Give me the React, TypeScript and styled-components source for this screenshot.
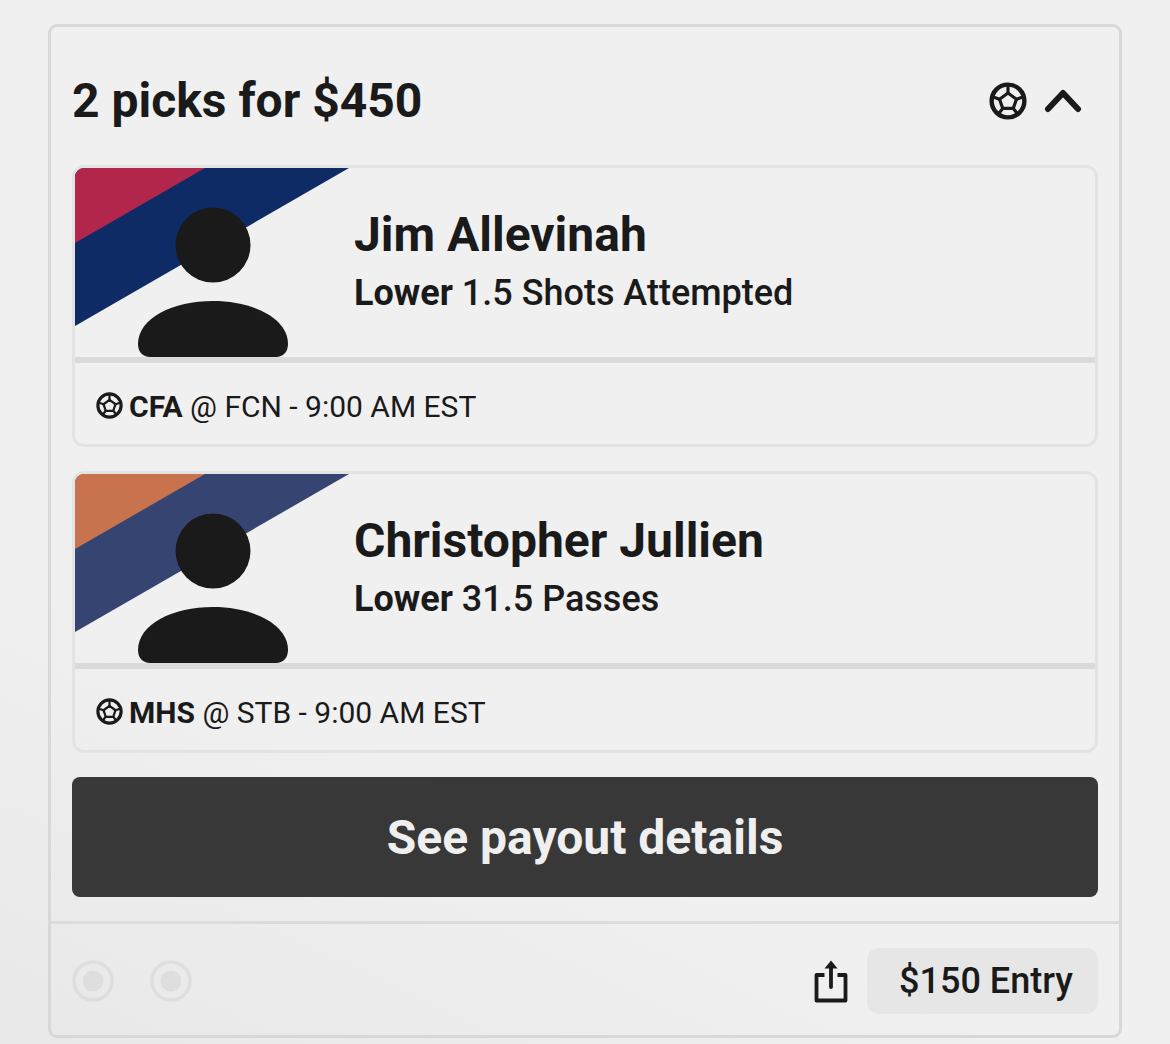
import React from 'react'
import styled, { createGlobalStyle } from 'styled-components'

const picks = [
  {
    name: 'Jim Allevinah',
    bet: 'Lower',
    line: '1.5 Shots Attempted',
    team: 'CFA',
    game: '@ FCN - 9:00 AM EST',
    primary: '#0f2b66',
    secondary: '#b1264a',
  },
  {
    name: 'Christopher Jullien',
    bet: 'Lower',
    line: '31.5 Passes',
    team: 'MHS',
    game: '@ STB - 9:00 AM EST',
    primary: '#364471',
    secondary: '#c9734e',
  },
]

const BallIcon = ({ size }: { size: number }) => (
  <svg width={size} height={size} viewBox="0 0 36 36" fill="none" stroke="#1a1a1a" strokeLinejoin="round">
    <circle cx="18" cy="18" r="15.500" strokeWidth="4.200" />
    <polygon points="18,10.500 26,16.300 23,25 13,25 10,16.300" strokeWidth="3" />
    <path d="M18 10.500V4M26 16.300l6-2M23 25l4 5M13 25l-4 5M10 16.300l-6-2" strokeWidth="3" />
  </svg>
)

const ShareIcon = () => (
  <svg width="34" height="44" viewBox="0 0 34 44" fill="none" stroke="#1a1a1a" strokeWidth="3.800" strokeLinejoin="round">
    <path d="M10.500 16H2.500V41.500H31.500V16H23.500" />
    <path d="M17 6V28" strokeLinecap="round" />
    <path d="M10.500 9.500L17 1.500L23.500 9.500Z" fill="#1a1a1a" stroke="none" />
  </svg>
)

const Radio = () => (
  <svg width="42" height="42" viewBox="0 0 42 42" fill="none">
    <circle cx="21" cy="21" r="19" stroke="#dedede" strokeWidth="3.500" />
    <circle cx="21" cy="21" r="10.500" fill="#dedede" />
  </svg>
)

const App = () => {
  return (
    <Page>
      <GlobalStyle />
      <Card>
        <Body>
          <Header>
            <Title>2 picks for $450</Title>
            <HeaderIcons>
              <BallIcon size={38} />
              <svg width="38" height="26" viewBox="0 0 38 26" fill="none" stroke="#1a1a1a" strokeWidth="6" strokeLinecap="round" strokeLinejoin="round">
                <path d="M4 21L19 5L34 21" />
              </svg>
            </HeaderIcons>
          </Header>
          <PickList>
            {picks.map((pick) => (
              <Pick key={pick.name}>
                <PickTop>
                  <Portrait viewBox="0 0 279 189" width="279" height="189">
                    <polygon points="0,0 274,0 0,158" fill={pick.primary} />
                    <polygon points="0,0 130,0 0,75" fill={pick.secondary} />
                    <circle cx="138" cy="77" r="37.500" fill="#1a1a1a" />
                    <path d="M63 176C63 150 98 133 138 133C178 133 213 150 213 176C213 184 208 189 201 189H75C68 189 63 184 63 176Z" fill="#1a1a1a" />
                  </Portrait>
                  <PickInfo>
                    <PlayerName>{pick.name}</PlayerName>
                    <Line>
                      <strong>{pick.bet}</strong> {pick.line}
                    </Line>
                  </PickInfo>
                </PickTop>
                <PickFooter>
                  <BallIcon size={27} />
                  <Game>
                    <strong>{pick.team}</strong> {pick.game}
                  </Game>
                </PickFooter>
              </Pick>
            ))}
          </PickList>
          <PayoutButton>See payout details</PayoutButton>
        </Body>
        <Footer>
          <Radios>
            <Radio />
            <Radio />
          </Radios>
          <FooterActions>
            <ShareIcon />
            <EntryPill>$150 Entry</EntryPill>
          </FooterActions>
        </Footer>
      </Card>
    </Page>
  )
}

const GlobalStyle = createGlobalStyle`
  html, body {
    margin: 0;
    padding: 0;
    background: #f0f0f0;
  }
  * {
    box-sizing: border-box;
  }
`

const Page = styled.div`
  width: 1170px;
  height: 1044px;
  padding: 24px 48px 0;
  overflow: hidden;
  font-family: Roboto, "Liberation Sans", sans-serif;
  color: #1a1a1a;
  background: linear-gradient(25deg, #e8e8e8 0%, #f0f0f0 30%);
`

const Card = styled.div`
  width: 1074px;
  height: 1014px;
  border: 3px solid #d8d8d8;
  border-radius: 9px;
`

const Body = styled.div`
  padding: 0 21px 0 21px;
`

const Header = styled.div`
  height: 138px;
  padding-top: 9px;
  display: flex;
  align-items: center;
  justify-content: space-between;
`

const Title = styled.div`
  font-size: 48px;
  font-weight: 700;
  line-height: 54px;
`

const HeaderIcons = styled.div`
  display: flex;
  align-items: center;
  gap: 17px;
  padding-right: 16px;
`

const PickList = styled.div`
  display: flex;
  flex-direction: column;
  gap: 24px;
`

const Pick = styled.div`
  height: 282px;
  border: 3px solid #e3e3e3;
  border-radius: 12px;
  overflow: hidden;
`

const PickTop = styled.div`
  height: 195px;
  display: flex;
  border-bottom: 6px solid #dadada;
`

const Portrait = styled.svg`
  display: block;
  flex: none;
`

const PickInfo = styled.div`
  display: flex;
  flex-direction: column;
  padding-top: 39px;
`

const PlayerName = styled.div`
  font-size: 48px;
  font-weight: 700;
  line-height: 56px;
`

const Line = styled.div`
  margin-top: 10px;
  font-size: 36px;
  font-weight: 500;
  line-height: 40px;

  strong {
    font-weight: 700;
  }
`

const PickFooter = styled.div`
  height: 81px;
  display: flex;
  align-items: center;
  gap: 6px;
  padding: 4px 0 0 21px;
`

const Game = styled.div`
  margin-top: 2px;
  font-size: 30px;
  line-height: 36px;

  strong {
    font-weight: 700;
  }
`

const PayoutButton = styled.div`
  margin-top: 24px;
  height: 120px;
  display: flex;
  align-items: center;
  justify-content: center;
  background: #383838;
  border-radius: 8px;
  color: #efefef;
  font-size: 48px;
  font-weight: 700;
`

const Footer = styled.div`
  margin-top: 24px;
  height: 114px;
  border-top: 3px solid #dcdcdc;
  padding: 2px 21px 0 21px;
  display: flex;
  align-items: center;
  justify-content: space-between;
`

const Radios = styled.div`
  display: flex;
  gap: 36px;
`

const FooterActions = styled.div`
  display: flex;
  align-items: center;
  gap: 19px;
`

const EntryPill = styled.div`
  width: 231px;
  height: 66px;
  padding-left: 7px;
  display: flex;
  align-items: center;
  justify-content: center;
  background: #e6e6e6;
  border-radius: 12px;
  font-size: 36px;
  font-weight: 500;
`

export default App
